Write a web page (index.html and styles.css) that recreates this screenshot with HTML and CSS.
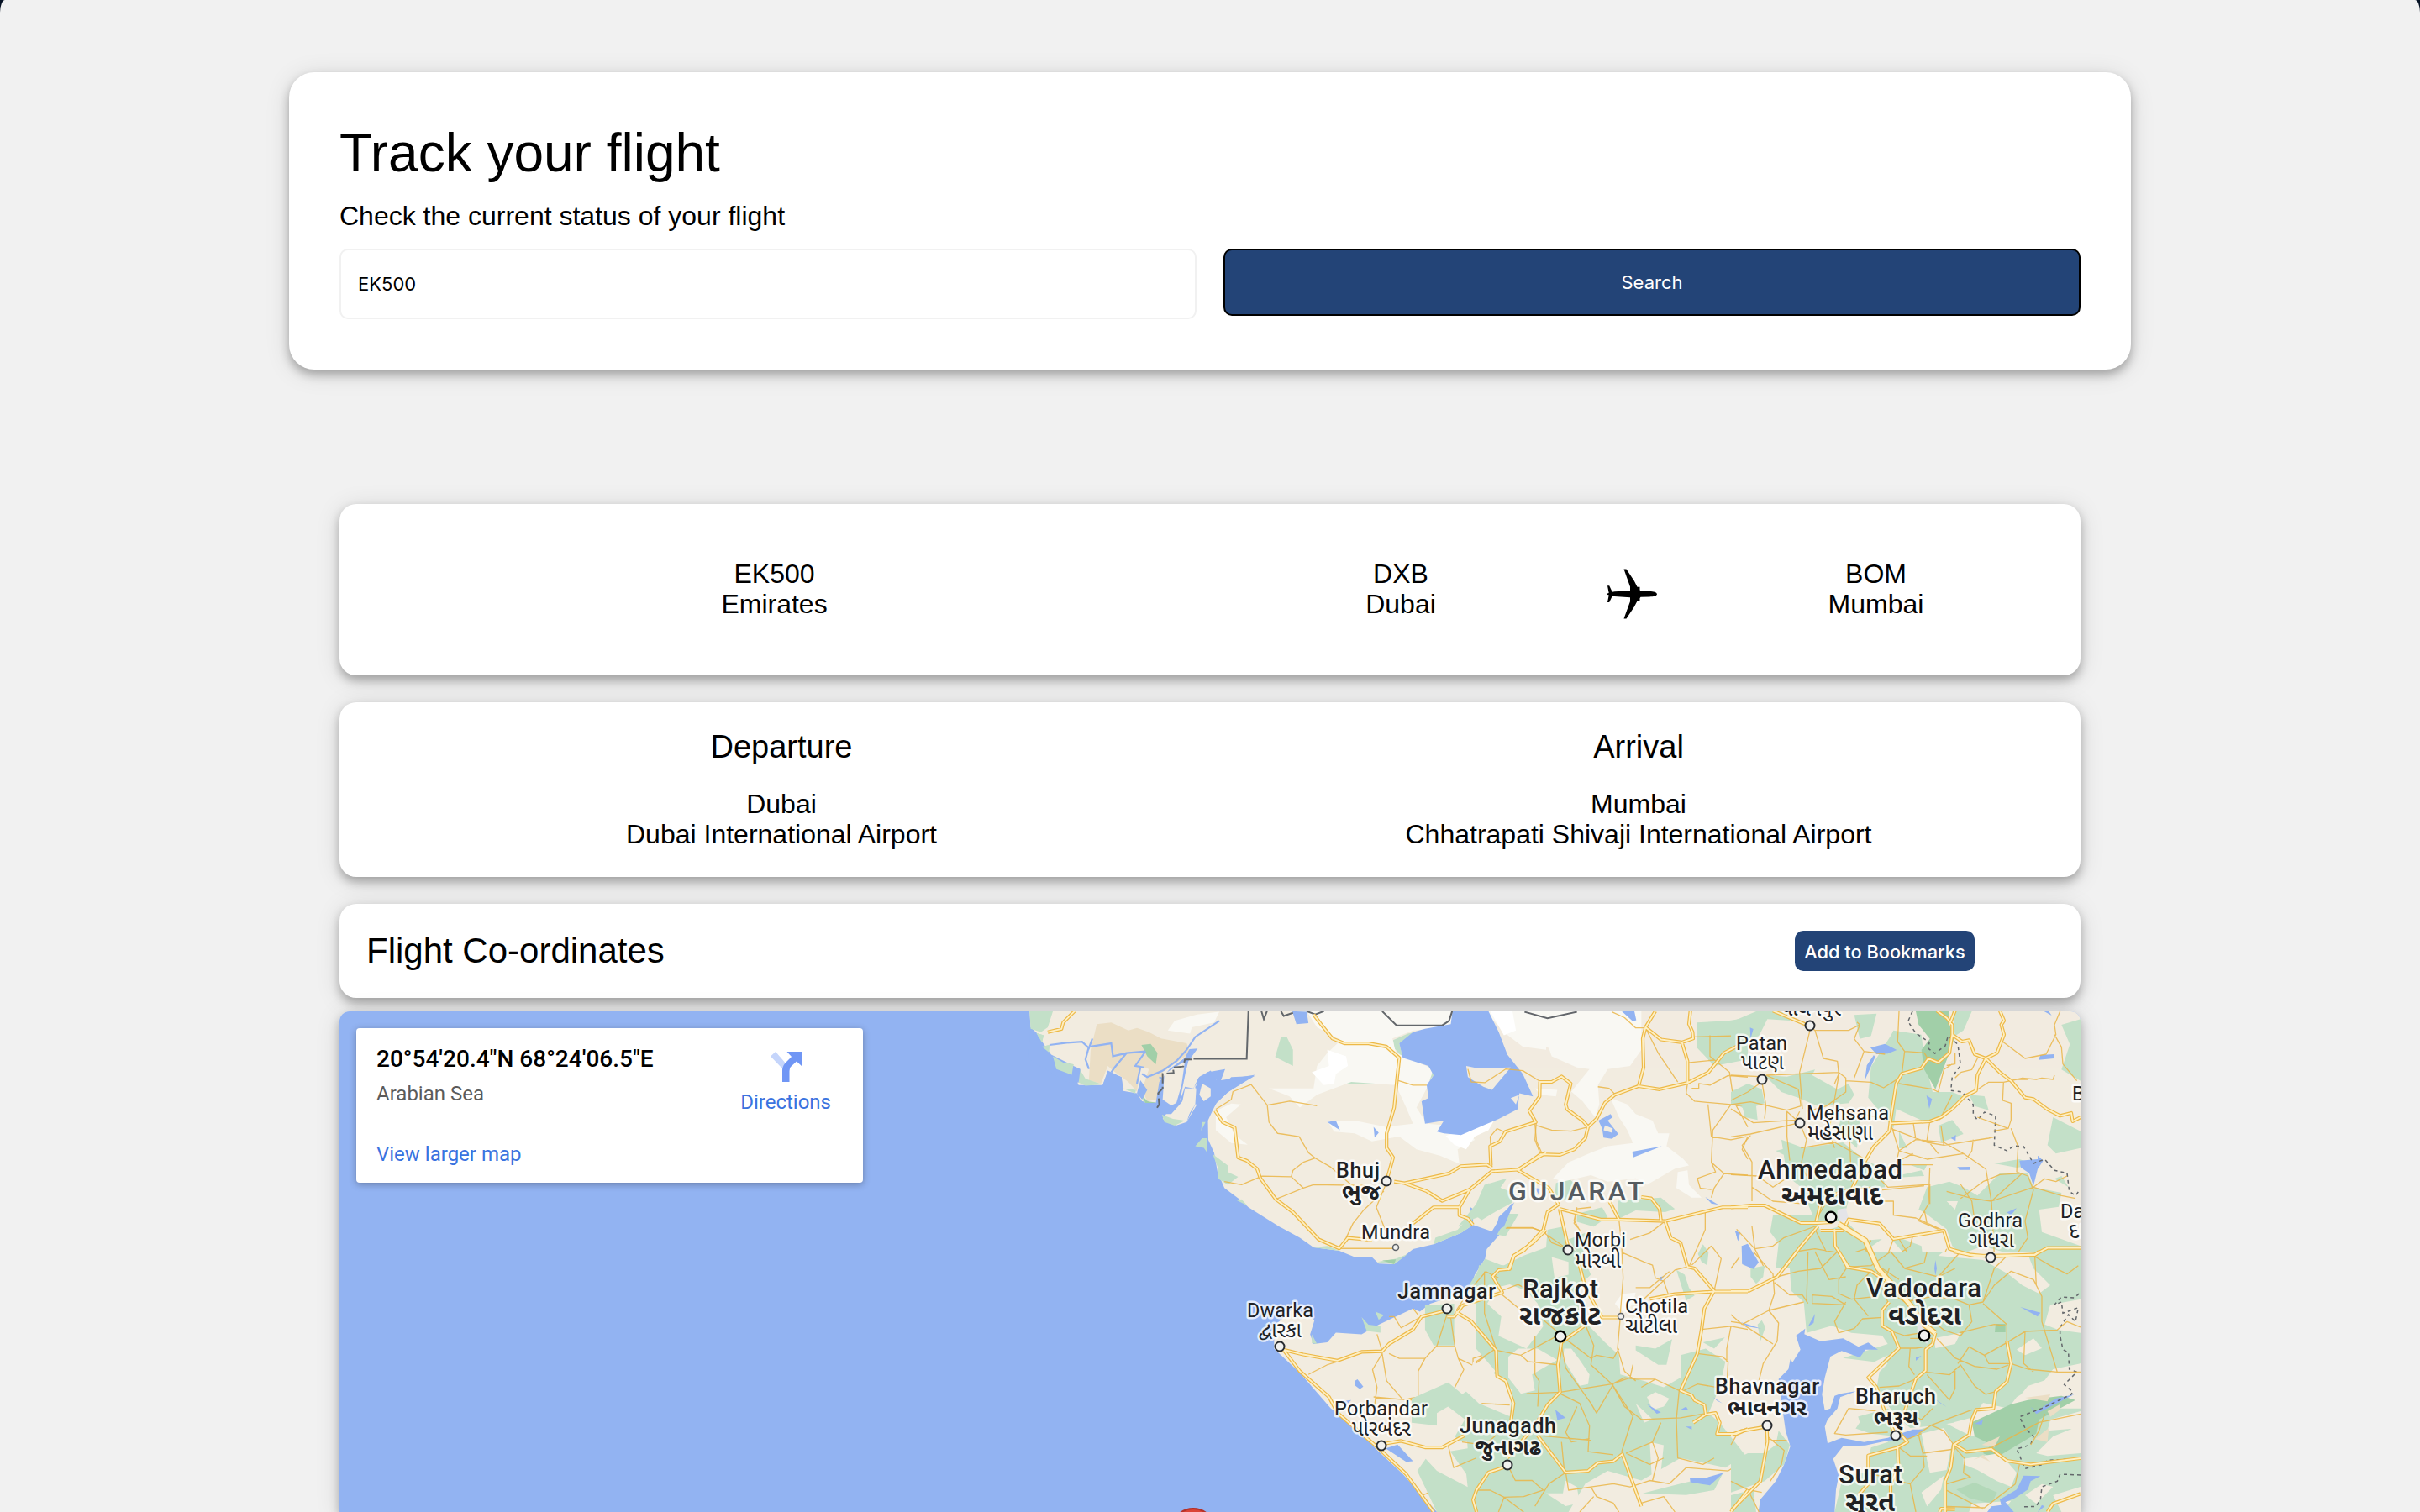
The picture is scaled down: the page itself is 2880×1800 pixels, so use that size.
FILE: index.html
```html
<!DOCTYPE html>
<html lang="en">
<head>
<meta charset="utf-8">
<title>Track your flight</title>
<link rel="stylesheet" href="styles.css">
</head>
<body>
<main class="page">
  <section class="card search-card">
    <h1 class="title">Track your flight</h1>
    <p class="subtitle">Check the current status of your flight</p>
    <form class="search-form">
      <input class="flight-input" type="text" value="EK500" aria-label="Flight number">
      <button class="search-button" type="button">Search</button>
    </form>
  </section>

  <div class="results">
    <section class="card summary">
      <p>EK500<br>Emirates</p>
      <p>DXB<br>Dubai</p>
      <svg class="plane" viewBox="0 0 60 60"><path d="M60 30.2C59.500 32.500 56 33.200 51 33.400L40.500 33.700 39.500 35.200V38.600H36.500L32.800 45.500 23.500 59.500H20.500L28 39V34.200L9.500 33 6.800 32.600 3.200 40H1L2.700 31.400 0 30.600V29.700L2.700 29 1 20.300H3.200L6.800 27.700 9.500 27.300 28 26.200V21.400L20.500.600H23.500L32.800 14.500 36.500 21.800H39.500V25.200L40.500 26.700 51 27C56 27.200 59.500 28 60 30.200Z"/></svg>
      <p>BOM<br>Mumbai</p>
    </section>

    <section class="card airports">
      <div>
        <h2 class="leg">Departure</h2>
        <p>Dubai<br>Dubai International Airport</p>
      </div>
      <div>
        <h2 class="leg">Arrival</h2>
        <p>Mumbai<br>Chhatrapati Shivaji International Airport</p>
      </div>
    </section>

    <section class="card coords">
      <h2 class="coords-title">Flight Co-ordinates</h2>
      <button class="bookmark" type="button">Add to Bookmarks</button>
    </section>

    <section class="map">
      <svg class="map-canvas" viewBox="404 1204 2072 596" preserveAspectRatio="none">
        <defs>
          <g id="major">
            <g transform="translate(1200 1200) scale(.40816 .38266)">
              <path d="M193 10L160 45 155 65 115 75M890 20L915 55 945 95 980 110 1050 110 1102 120 1140 155 1133 225 1125 310 1103 390V435L1122 465 1105 530M603 320L625 355 660 372 670 465 695 475 725 500 735 530 780 595 830 635 905 720 965 748 990 715 1060 722M1125 540L1155 545 1285 515 1320 492 1395 487 1410 497M1155 545L1220 570 1265 600 1345 565 1410 508 1485 503 1568 450M1180 670L1240 620H1315L1345 565M1315 620V645L1340 655 1355 675M790 1040V1060L860 1078 960 1097 1030 1070 1090 1068 1110 1045 1180 1000 1205 960 1280 940M1280 960H1300L1325 925 1440 885 1412 835 1430 815 1462 812 1475 770 1530 730 1568 690M1305 945L1350 975 1422 1065 1425 1145 1450 1160 1473 1230 1465 1290M800 1060L850 1130 935 1210 960 1260 1080 1370 1160 1450 1240 1568M1100 1355L1145 1347 1215 1367H1265L1330 1330M1455 1425L1400 1445 1365 1500 1355 1530 1365 1568"/>
            </g>
            <g transform="translate(1680 1200) scale(.33333 .38266)">
              <path d="M870 10L835 60 825 95 828 185 810 243 885 253 985 233 1060 200 1115 140 1160 120M835 60L890 98 965 107 985 165V233M965 107L1005 95 1003 75 990 50 995 10M810 243L725 270 690 295 660 345 630 370 610 350 555 315 550 300 568 235 535 213 500 230H458L457 275 420 320 443 355 335 385 315 415 280 430 283 490M630 370L620 405 580 440 530 457 460 455 380 505 490 560 525 612M1200 620H1110L905 663 745 658H675L530 625M705 600L740 658M820 588L855 592 885 625 890 660M905 663L925 715 960 730 985 805 1010 810 1080 880 1045 935 1035 1000 1020 1075 960 1190 1000 1205 1010 1220 1045 1235 1050 1265 1085 1260 1100 1290 1090 1325H1160L1200 1310M1050 1265L1005 1290M1200 882H1080L940 890 850 905M525 610L485 635 470 690 400 755 365 770 345 815M528 625L558 740M590 770L620 870 680 963H745M615 990L535 1040 522 1110 530 1195 485 1235 440 1300 342 1400M450 1330L550 1445 630 1440 665 1415 720 1410 752 1388 820 1550M1200 1500L1140 1568"/>
            </g>
            <g transform="translate(2060 1200) scale(.33333)">
              <path d="M150 10L270 60M735 10L770 35 790 60V95L780 160 740 195 705 180 680 215 610 235 590 270 570 400 565 440 510 495 480 545 430 650M800 10L780 60M790 95L825 120 850 115 870 165 910 180 950 160 975 95 965 60 975 45 960 10M910 180L880 240 875 295 835 315 790 360 750 390 710 405 570 412M910 180L960 230 1000 260 1050 320 1080 325 1130 362 1175 385 1215 375 1220 405 1248 390M0 712L70 705H120L250 768H310L360 765M310 780L250 850 190 930M305 760L320 700 400 650M320 795H400L420 755 530 770 580 825 760 795 780 860 850 880 930 888 1085 880 1130 857H1248M370 790L372 850 420 925"/>
            </g>
            <g transform="translate(2060 1490) scale(.33333)">
              <path d="M730 290L720 330 695 350V425L660 455 620 570 600 640M565 180L540 210V265L575 285 600 345 490 450 520 485 545 560 580 640M385 0L415 55 500 70 560 110M235 0L165 90 65 140H0M795 0L870 15 1085 12 1100 0M985 320L1000 400 985 465 945 500 937 560 875 565 860 600 850 655 795 690 785 770 765 820V930M800 690L840 715 930 705 985 747 1070 760 1248 738M595 640L630 680 595 700 490 728V830L455 870M595 700L598 770 570 830V870M0 655L40 640 128 625 130 680 105 820 0 925M1130 930L1150 900 1248 865M745 930L750 918 800 920"/>
            </g>
          </g>
          <path id="highway" d="M2188 1457L2220 1477 2235 1510 2273 1553 2290 1577 2303 1587"/>
        </defs>

        <rect class="land" x="1840" y="1200" width="640" height="600"/>

        <!-- western coast -->
        <g transform="translate(1200 1200) scale(.40816 .38266)">
          <path class="land" d="M62 10H1570V1568H1250L1150 1450 1070 1370 1040 1330 940 1245 850 1135 775 1060V990L830 935 893 970 880 1015 890 1045 930 1040 955 1010 1030 1015 1080 985 1120 965 1180 935 1200 945 1230 920 1345 880 1360 830 1390 780 1395 750 1445 690 1470 605 1430 660 1410 695 1355 675 1320 700 1240 735 1180 750 1125 797 1080 795 1060 775 1010 775 965 755 890 745 850 715 790 680 700 620 680 600 630 560 610 510 600 450 583 410 582 350 595 320 607 295 640 262 680 235 718 212 650 215 600 265 605 225 632 190 580 200 545 245 550 300 520 355 490 365 450 345 480 300 450 290 435 295 390 290 375 265 335 258 330 215 290 200 275 240 205 240 190 205 140 190 120 150 100 120 85 80 65 60Z"/>
          <path class="tan" d="M258 50L300 45 350 70 375 62 410 75 445 95 520 110 530 140 450 200 435 285 405 290 390 255 410 190 385 180 375 260 350 230 305 195 290 180 270 235 235 225 240 130Z"/>
          <path class="green" d="M62 10H130L115 60 95 75 65 65ZM82 78L103 85 98 108ZM98 120L120 115 118 138ZM130 150L160 170 190 175 185 208 140 190ZM205 185L225 220 275 238 225 242 205 232ZM335 250L372 255 370 266ZM388 272L410 292 430 290 395 294ZM448 332L480 345 515 350 485 366 455 355ZM565 355H575L562 382ZM565 405H580V450L570 435 545 430ZM596 455L640 490 640 510 670 525 640 550 610 530 612 500ZM795 90H812L830 130V180L778 152ZM960 195L990 175 1100 167 1105 235 960 237ZM1122 100L1165 80 1185 75 1140 110 1150 155 1125 125ZM1225 170L1240 210 1220 235ZM680 595L697 615 665 598ZM890 745L965 755 930 740ZM1075 790L1130 780 1165 765 1125 797ZM1245 715L1310 690 1350 640 1355 675 1320 700 1240 735ZM1365 620L1410 605 1440 590 1395 575 1400 545 1460 570 1470 605 1410 640 1380 660 1355 640ZM1460 640L1488 640 1450 710 1425 705ZM1390 780L1450 805 1500 780 1570 765V870L1440 880 1470 920 1350 900 1345 860ZM1030 962L1050 985 1085 990V1010L1045 1005ZM1070 945L1095 955 1080 970ZM1215 925L1300 920 1300 1050 1240 1050 1215 1000ZM885 1015L900 1045 885 1043Z"/>
          <path class="dgreen" d="M388 115L415 112 435 140 430 175 405 150ZM1090 785L1130 782 1125 797ZM388 270L405 290 435 295 400 295Z"/>
          <path class="pale" d="M465 70L485 40 550 20 615 12 600 45 535 60 530 80ZM870 10H1400L1370 60 1290 60 1180 70 1120 95 1130 140 1240 190 1220 250 1190 310 1220 360 1330 370 1360 410 1310 440 1315 485 1260 460 1190 440 1140 400 1060 415 1010 390 950 385 930 350 1010 350 1100 370 1180 360 1160 310 1130 240 1000 230 900 270 850 310 820 275 760 250 890 250 900 180 930 140 970 100 900 60ZM605 320L650 297 678 300 635 340 660 395 698 425 650 420 605 380ZM1390 10H1568V130L1500 120 1450 80Z"/>
          <path class="white" d="M930 130L985 150 990 180 955 205 950 235 920 240 885 200 935 180ZM1405 10H1470L1480 70 1445 85ZM1275 398L1330 380 1415 352 1400 380 1360 400 1335 440 1300 425Z"/>
          <path class="water" d="M828 10L840 50 875 47 870 12ZM1140 110L1180 75 1215 65 1290 50 1295 10H1400L1430 75 1455 145 1500 205 1530 275 1490 265 1485 315 1430 345 1375 370 1320 395 1270 390 1250 385 1270 350 1215 360 1205 290 1225 280 1220 240 1240 210 1225 180 1150 155ZM930 355L955 350 967 380ZM1065 370L1080 388 1068 403ZM1010 1160L1018 1155 1035 1178 1025 1186 1012 1175ZM1100 1370L1135 1358 1180 1410 1160 1412ZM1240 1470L1247 1468 1243 1493ZM1345 618L1355 625V675ZM1525 795L1533 800 1533 828ZM1430 650L1475 605 1445 680 1420 695ZM960 1225L1000 1220 985 1235Z"/>
          <path class="land" d="M1335 180L1365 187 1465 185 1410 255 1385 245 1340 215ZM1465 280L1490 270 1480 300Z"/>
          <path class="creek" d="M120 115L170 108 215 105 235 125 245 95M235 120L225 160 235 190M240 120L300 110 305 150 345 140 400 135M345 140L310 185 300 200M400 135L370 180 395 185M385 185L375 235M520 130L545 90 615 40M450 195L490 165 520 130M450 195L405 215 390 205M450 220L440 215"/>
          <path class="water" d="M430 295L440 230 470 190 515 155 528 128 552 126 525 165 518 195 500 290 515 245 540 250 555 215 590 195 605 225 615 200 632 190 620 225 720 208 680 235 640 262 607 295 590 320 580 350 560 300 545 300 520 355 540 290 550 235 500 300 475 330 450 330ZM62 80L90 90 105 115 125 145 190 180 210 190 205 232 170 230 60 160ZM275 240L290 195 330 215 335 255 300 260ZM375 265L385 225 405 255 390 285Z"/>
          <path class="green" d="M82 78L103 85 98 108ZM98 120L120 115 118 138ZM130 150L160 170 190 175 185 208 140 190Z"/>
          <path class="land" d="M455 205L515 165 505 240 490 295 475 303 450 285ZM515 250H548L545 300 515 350 485 340 480 328 505 305ZM565 235L590 250V275L570 290 557 270ZM520 190L590 165 620 180 570 195 535 245 515 240Z"/>
          <path class="border" d="M700 10L695 158H540M738 10L745 35 754 10M795 10L803 25 830 15M870 10L895 20 920 10M1090 10L1132 54H1265L1285 40 1294 10M1505 12L1568 32"/>
          <path class="border dash" d="M535 160L515 160 510 182 480 185 482 202 450 205V250L437 265 440 300 430 316"/>
          <path class="minor" d="M655 260L650 285 605 315M655 260L708 238 755 302 820 290 900 304M755 302L760 355 785 390 848 400 875 450 895 467 940 495 1000 550M895 467L860 480 830 505 825 525 740 523 680 550 630 540M825 525L860 560 780 595M860 560L890 550 1040 552M1102 545L1073 620 1110 720M1095 570L1035 630 1005 670 985 715M965 748H1128M1135 225L1180 240H1220M1410 497L1405 400 1425 375 1445 385M1535 355L1540 415 1555 450M1450 685H1530L1568 700M1340 190L1350 230 1390 232 1450 190 1500 195 1550 228M1390 825L1350 900M1390 825L1420 850M1392 900V990L1420 1065 1500 1070 1540 1110 1568 1105M1280 950L1250 1050 1215 1090 1195 1130V1210L1150 1218 1103 1160 1090 1075 1062 1125 1075 1180 1065 1260M1250 1053H1302L1290 965M1302 1053L1312 1090 1328 1125 1295 1195 1315 1240 1380 1290M1215 1090H1140L1110 1075M1312 1090L1355 1112 1420 1060M1355 1112V1090L1400 1075M875 1140L930 1110 960 1100M1090 1068L1075 1015M1195 955L1180 935M1205 960L1145 995 1125 960H1110M1065 1210L1150 1218 1270 1225 1295 1195M1270 1225L1310 1240 1320 1270M1380 1225L1475 1235 1525 1220 1568 1200M1380 1225L1360 1260M1265 1367L1270 1405 1315 1435 1375 1375 1420 1370M1315 1435L1345 1495 1365 1500M1215 1370L1230 1390 1220 1445 1240 1500 1210 1515M1240 1500L1265 1490 1295 1500 1300 1530 1330 1565M1400 1445L1315 1435M1455 1425L1410 1490 1445 1522 1485 1500V1470L1455 1425M1445 1522L1370 1500M1445 1522L1430 1568M1445 1522L1490 1568M1445 1522L1530 1515 1568 1490M1485 1470L1520 1465 1568 1500"/>
        </g>

        <!-- central peninsula -->
        <g transform="translate(1680 1200) scale(.33333 .38266)">
          <path class="green" d="M240 800L330 800 400 770 480 745 485 690 540 680 560 740 610 770 640 830 590 870 600 960 690 1040 740 1080 745 1140 830 1160 900 1180 960 1150 960 1080 1050 1060 1120 1100 1100 1180 1060 1260 1100 1290 1190 1390 1120 1430 960 1400 820 1470 700 1440 620 1480 560 1568 90 1568 20 1440 60 1390 200 1370 190 1250 150 1220 300 1130 230 1060 230 880ZM0 1215L130 1165 200 1215 350 1280 330 1340 180 1350 100 1300 0 1290ZM1017 45L1130 40 1200 30V160L1080 180 1020 125ZM1150 255L1200 260V320L1160 300ZM515 545L560 530 600 560 560 600 510 590ZM735 600L890 590 940 625 905 635 800 630 740 655ZM590 640L680 620 700 650 650 680 590 665ZM1040 735L1060 760 1055 800 1035 790 1022 765ZM945 815L975 830 990 870 1010 895 980 910ZM800 1050L870 1060 930 1030 910 1110 880 1110 800 1065ZM1040 1040L1118 1025 1080 1060ZM560 720L620 700 630 740 600 770ZM825 1510L960 1480 1110 1450 1080 1500 980 1515ZM260 550L340 530 300 580 340 590 270 640 210 660 165 680 230 610Z"/>
          <path class="land" d="M300 870L350 860 410 880 450 920 470 990 410 1060 310 1020 320 960 270 920ZM345 1085L380 1060 450 1060 520 1095 430 1140 440 1190 390 1200 345 1150ZM545 1060L570 1060 600 1095 635 1140 630 1170 600 1175 540 1090ZM500 775L560 790 560 830 510 840ZM840 1210L870 1195 920 1215 900 1240 860 1250ZM220 1100L300 1140 360 1190 350 1270 240 1230 190 1190ZM90 1260L130 1240 190 1280 150 1340 60 1350 0 1310 90 1300ZM10 1365L130 1370 195 1450 200 1490 90 1440ZM548 1470L590 1490 600 1540 550 1550 480 1510 540 1510ZM850 1350L900 1360 890 1440 920 1480 860 1500ZM960 1400L1030 1420 950 1450ZM800 1230L860 1280 830 1290Z"/>
          <path class="pale" d="M400 10H820V130L780 180 700 190 665 240 670 300 655 340 610 290 570 260 635 190 590 185 500 150 490 125 400 80ZM710 280L770 300 800 330 860 350 880 390 920 390 910 430 970 470 990 490 940 500 840 550 800 530 700 540 640 520 540 540 505 530 560 480 640 450 700 430 790 420 770 380 740 340ZM950 510L985 505 990 550 1035 590 1000 590 945 560ZM750 890L800 885 790 920 760 950 725 920ZM440 250L520 255 515 275 460 270Z"/>
          <path class="water" d="M750 10H795L802 38 790 42ZM667 350L710 330 718 340 700 350 738 392 715 407 685 403 680 375ZM788 447L893 430 790 465ZM1155 693L1172 700 1165 725ZM1178 740L1200 735V800L1180 795ZM1048 588L1095 612 1070 608ZM440 560L458 562 452 578ZM840 1232L890 1258 875 1262ZM960 1250L980 1240 988 1252ZM978 1302H1000V1312ZM513 1250L550 1275 520 1282ZM993 1462L1050 1462 1115 1445 1065 1485 1040 1482 995 1475ZM885 837L900 835 890 850ZM1075 1210L1110 1230 1090 1222Z"/>
          <path class="land" d="M690 365L718 375 715 388 685 380Z"/>
          <path class="border" d="M403 12L485 32 590 12"/>
          <path class="minor" d="M445 355L440 410 460 455M443 365L500 380 570 383 630 370M715 12L760 30 800 62 835 62M665 245L705 250 725 268M835 62L880 140 950 230M985 170L1080 162M1065 85V150L1135 200 1150 290 1200 370M1010 90L1200 85M985 233L980 265 1010 290 1200 305M1058 300L1070 400 1140 410 1195 400M1140 300L1075 380 1070 480 1115 515 1200 520M1070 480L1085 510 1020 530 1030 560 1070 565M1000 250L1025 250V235L1065 240 1130 210 1200 215M1115 515L1080 560 1070 590M1200 400L1180 440 1200 470M905 663L850 700 780 720M1048 630V690L990 805M1070 740L1105 780 1090 840 1080 880M1070 740L1000 800M340 683H430L465 695 540 740M470 690L500 730 560 750M590 620L580 670 600 690M640 620L590 625 580 660 605 700M740 658L750 740 755 840 745 950M750 760L830 790 860 800 870 840 900 850 920 900M920 820L850 870 800 870M985 805L940 815 860 880 830 905M470 970L550 1030 640 1090 660 1080 720 1090 740 1060M620 985L650 1050 640 1110 715 1170 780 1150 790 1110M265 820L310 840M265 820L205 880 160 940M260 820V950L303 1065M320 890L390 940 450 960M320 880L380 860 400 870M305 1065L390 1080 520 1020M390 1080L415 1100 520 1110M440 1020V1140L455 1160 450 1240M530 1195L410 1200M530 1195L715 1170 760 1150 800 1155M530 1200L600 1230 635 1300 630 1380 720 1390M720 1170L660 1260 640 1230 550 1120 535 1050M715 1170L760 1240 820 1280 960 1275 1060 1260M715 1170L790 1270 750 1380M800 1155L870 1155 955 1190M870 1155L820 1180M955 1190L945 1280 950 1400 1040 1420 1080 1400M1035 1000L1140 990 1200 1000M1020 1075L1110 1085 1130 1100 1125 1180 1170 1200M1140 990L1125 1060 1125 1100M960 1195L1020 1170 1090 1180M745 960L735 1060 760 1130 800 1160M590 1240L550 1320 570 1350 635 1340M450 1330L640 1345M535 1350L545 1440M550 1445L490 1480 440 1550M550 1445L560 1500 640 1490 720 1480 780 1490 850 1470 920 1480M640 1490L660 1520 720 1540 740 1568M820 1540L900 1520 940 1568M765 1385L860 1350 890 1290M765 1385L850 1420 900 1400M860 1350L880 1400 860 1470M342 1420L370 1470 430 1470 470 1500 400 1520 330 1522M330 1522L280 1500 230 1500M330 1522L310 1568M330 1522L400 1568M250 1230L350 1235M180 1350L260 1360 300 1330M230 1100L300 1060M130 1360L150 1430 230 1400M600 1568L650 1520M1200 1400L1130 1440 980 1430 920 1480"/>
        </g>

        <!-- north east -->
        <g transform="translate(2060 1200) scale(.33333)">
          <path class="green" d="M0 50L90 12H150L230 20 210 45 130 40 100 100 0 130ZM440 25L520 20 500 100 460 110ZM580 80L680 95 690 180 720 300 790 300 840 320 760 380 700 410 590 360 580 430 490 320 500 210 570 100ZM790 12H860L830 80 800 100ZM120 240L200 245 300 220 290 240 380 290 420 270 440 310 420 340 310 350 240 320 180 300ZM0 300L60 270 110 290 120 340 90 350 95 400 50 390 40 350 0 345ZM180 470L260 500 400 480 480 545 540 570 550 640 430 650 400 760 300 760 250 640 200 600ZM160 510L200 500 200 530ZM150 740L300 740 320 800 420 770 480 830 600 820 680 850 690 930H160L170 840 140 800ZM700 640L780 620 830 640 880 670 960 590 1060 590 1080 640 1180 660 1170 710 1100 720 1110 800 1248 850V930H980L1000 880 900 850 820 880 790 850 770 790 690 730 670 720ZM940 555L1030 540 1090 560 1020 570ZM1150 390L1248 440V500L1160 520 1130 490ZM1180 60L1248 40V260L1180 220 1210 130ZM1155 610L1180 600 1205 640ZM850 310L905 315 920 365 870 350ZM740 420L790 400 830 450 750 480ZM590 600L680 580 690 600 600 605ZM400 370L460 400 450 500 380 440ZM640 560H700L690 580ZM600 500L630 500 600 440Z"/>
          <path class="dgreen" d="M660 12H780V60L800 100 780 160 730 290 690 220 680 150 710 110 670 60Z"/>
          <path class="land" d="M490 860L560 810 620 880 590 920H500ZM700 800L760 810 730 830ZM220 400L330 440 380 480 250 480ZM770 690L810 690 800 720Z"/>
          <path class="water" d="M498 142L550 128 592 150 560 163 520 165ZM510 168L515 175 478 258 485 205ZM698 312L718 325 708 360ZM1105 168L1153 165V180L1098 185ZM785 465L803 453 802 475ZM808 568L855 567V578H815ZM1030 545L1095 540V527L1115 545 1095 575 1080 635 1065 590 1035 570ZM68 70L80 75 70 110ZM15 795L32 805 25 832ZM40 850L60 842 100 910 50 915ZM730 900L735 905 730 930ZM985 730L1020 715 1000 740ZM1118 12H1135L1145 27Z"/>
          <path class="border dot" d="M648 12L632 48 660 90 708 122 705 145 728 162 765 135 775 100 810 130 820 205 790 245 785 295 825 300 865 345V380L880 400 905 372 945 385 940 490 985 510 1010 492 1045 495 1080 555 1120 540 1155 580 1200 590 1208 655 1230 670 1245 650"/>
          <path class="minor" d="M282 65L300 80H420L460 60 450 50M282 80L245 230 255 360M300 80L330 180 380 190 385 235M125 240L385 230 410 250 410 300 340 350 270 370M125 240L240 290 250 350M0 240L100 245M460 60L440 110 475 155 550 165M475 155L440 250M600 12L595 120 620 155 690 160 705 185M620 155L610 235M385 235L370 270M410 260L500 265 545 285 600 250M600 270L720 290 740 300M130 250L60 300 0 330M110 260L125 350 120 395M0 345L70 335 200 365 250 350M0 360L80 410 230 400M245 410L70 450 0 460M245 410L200 370V460L210 545M70 455L40 490 75 550V690M0 595L95 600 150 640 210 600M75 640L150 690 270 700M245 410L270 470 250 560 270 600M385 240L350 440 370 500M250 500L370 480 480 540M420 380L430 620M570 412L600 510 700 540 830 520M600 510L590 550 650 520M650 405L660 470 600 510M710 405L700 470 740 520M660 470L760 480 830 520 910 575 930 690 940 880M570 430L700 480 760 490 920 465 940 460M865 470L860 510 840 540M750 420L760 490M880 390L990 430 1000 400 1000 340 970 330 973 265M1000 430L1025 495 1020 585 1060 600 1080 650M935 440L990 430M875 295L920 265 973 265M973 265L1020 255 1060 255M1000 260L1040 250 1090 255 1110 250 1150 255 1155 240M970 120L1050 180 1125 165 1160 95 1155 60 1175 12M1155 95L1180 140 1185 200 1235 260M820 230L860 220 880 180M800 250L820 230M770 205L800 200V160M740 300L760 220 790 200M745 400L790 310M480 545L500 580 560 640 710 630 710 700M500 580L600 560 720 560M710 570L705 700 670 760 740 790M540 650L690 635M530 690L580 690V740L660 750 760 795M820 680L900 620 960 595 1040 590M770 655L860 680 930 690 1080 640 1180 670 1230 680M820 630L860 690 870 760M1080 640L1120 610 1160 620 1200 600M1080 650L1050 760 1060 820 1020 880M930 690L1040 590M700 770L690 720M85 860L20 790M75 780L85 860 150 850 190 820 300 780M85 860L120 930M300 790L340 870 380 930M230 870L300 860 420 880 480 860 500 830M420 880L440 930M480 860L510 930M580 825L560 880 540 910M600 825L640 890 620 930M640 890L800 870M770 860L740 930M930 890L870 930M940 890L1010 930M0 930L30 890M245 370L230 400M570 405L480 380 420 370M400 650L350 680 300 760M400 650L500 640M650 810L640 850 540 920"/>
          <path class="city" d="M380 720L410 715 420 750 395 765 380 750Z"/>
        </g>

        <!-- gulf and south east -->
        <g transform="translate(2060 1490) scale(.33333)">
          <path class="green" d="M200 0H1248V400L1150 420 1120 460 1020 520 990 560 900 540 860 600 740 620 640 630 560 560 450 590 440 630 500 650 590 660 760 610 860 660 1000 620 1100 560 1248 560V930H370L400 800 480 790 500 700 560 680 590 590 520 490 530 430 560 400 400 380 560 330 540 300 430 290 360 265 270 290 260 180 215 140 210 60ZM95 260L110 245 123 270 105 320ZM70 60L120 50 115 90 90 115 70 90ZM170 640L210 690 190 760 120 820 0 860V750L60 720 120 720 160 690ZM0 870L80 850 90 930H0Z"/>
          <path class="dgreen" d="M860 610L1000 545 1060 530 1180 515 1230 530 1100 600 1090 650 990 710 940 740 900 720 930 690 870 660ZM945 258H980V288H942Z"/>
          <path class="land" d="M940 0H1090L1060 10 1080 60 1140 120 1100 150 1040 120 990 80 900 30 740 15 760 0ZM725 310L820 290 800 330 730 345ZM1140 190L1248 170V290L1170 280 1120 260ZM1020 350L1080 310 1110 345 1050 370ZM400 390L500 400 560 370 510 430 470 440 500 500 440 510 380 560 340 600 330 500 350 400ZM350 650L400 555 445 560 460 610 440 640 480 650ZM390 700H480L480 740 440 760 370 740ZM680 650L760 630 790 680 770 780 710 790 690 700ZM795 610L870 590 840 640 800 630ZM830 740L960 720 1020 790 1000 840 950 820 880 780 830 760ZM680 860L760 800 750 850 700 910ZM1090 720L1150 660 1248 620V720L1130 730ZM1020 530L1060 480 1150 450 1248 400V470L1100 510ZM1140 600L1248 570V630L1130 640ZM860 900L1000 890 970 930H850ZM1050 870L1110 830 1150 840 1090 900ZM1150 870L1248 840V930H1180Z"/>
          <path class="tan" d="M1050 522L1140 510 1130 535ZM1130 570L1175 545V565L1140 590ZM1085 670L1135 630 1130 680ZM895 690L960 660 940 700ZM865 745L900 725 925 750 890 735Z"/>
          <path class="dgreen soft" d="M805 850L870 825 950 860 930 900 850 880Z"/>
          <path class="water" d="M275 268L300 222 295 255ZM232 300L265 275 262 295 320 320 400 310 455 340 490 325 525 350 480 350 460 378 395 355 355 375 335 450 325 510 335 567 355 560 370 515 390 508 450 498 390 520 380 560 345 600 335 625 345 685 395 665 475 680 560 665 650 635 690 635 640 668 560 675 480 692 400 695 365 740 385 800 375 850 370 930H98L105 885 160 820 190 760 212 695 195 640 185 570 170 455 205 420 212 385 220 395 248 350ZM40 0H70L75 30 98 40 80 62 40 45ZM730 30L735 60 730 85 726 60ZM1033 198L1105 218 1095 232ZM870 615L900 600 895 618ZM35 252L108 275 60 268ZM660 378L680 372 660 390ZM720 520L770 555 745 540ZM1070 555L1090 570 1160 525 1225 510 1090 580ZM1045 800L1105 802 1070 820 1060 850 1015 880 980 895 1010 930H915L930 910 965 905 960 885 1020 850ZM1110 905L1120 910 1095 930Z"/>
          <path class="border dot" d="M1243 150L1225 165 1180 162 1155 190 1180 180 1185 220 1240 200 1230 250 1205 225 1175 270V300L1185 350 1205 360 1208 420 1235 430 1190 475 1220 500 1215 510 1110 560 1030 590 1050 630 1080 660 1070 690 1020 705 1050 775 1115 760 1130 745 1248 740M1248 798L1175 795 1165 820 1110 840 1105 885 1090 910 1035 912"/>
          <path class="minor" d="M80 0L150 80 155 150 135 210 170 255 165 320 115 400 100 460M0 225L40 260 135 210 260 180M155 110L210 155H255L275 185M165 90L240 70 320 60 380 0M300 0L330 60 350 100 410 90M0 250L35 255 120 310 150 330M275 0L270 180M290 155L360 160 410 190 290 185ZM410 180L370 250 385 290 440 275 470 240 540 235M415 55L385 100V150L430 170 520 160M500 70L450 120 440 170 490 230M415 55L500 50 570 0M540 60L600 100M620 60L570 0M620 60L690 40 700 0M620 60L740 90 800 60M820 0L740 90M640 310L720 310M575 285L620 300 680 290M600 345L640 345 635 410 655 440M635 345H660L695 340M735 310L800 380 870 410 950 420 990 405M820 300L760 280 735 260M815 290L940 260 985 265V320M850 190L860 250 820 300M900 185L985 260M850 190L900 180 940 120 1000 70 1080 100 1110 160V250L1165 430M985 325L1050 285 1165 280 1200 250 1248 270M905 370L985 325M905 370L850 340 810 400M905 370L920 400 1000 400 1060 420 1165 430 1248 430M1050 285L1045 400 1080 430M695 430L780 440 820 405 870 480 910 510 945 500M700 440L780 530 800 490 800 420M530 485L600 480 660 455M715 620L860 565M670 650L715 620 760 640 795 690M670 655L685 720 800 705M630 670L680 650M420 560L370 650 410 655 560 645M420 560L530 570M600 700L640 730 700 730M640 830L690 770 685 720M640 830L660 930M490 790L560 810 640 830M800 700L835 740 830 790 855 805 770 830M1030 760L1015 830 950 880 905 915 770 910M930 700L1100 610 1248 580M1085 20L1090 120 1110 160M1080 15L1140 50 1200 80 1240 50M980 20L940 60 900 180M0 690L20 655M128 670L200 675M130 660L190 710 180 760 140 820M0 820L60 850 110 860M60 850L100 930M1120 580L1100 640 1070 690M765 850L900 920M565 60L540 130 560 180M620 570L680 600 720 560M560 140L620 180 720 160 800 170 850 190"/>
          <path class="city" d="M665 260L700 250 720 280 700 330 665 300Z"/>
        </g>

        <use href="#major" class="road-edge"/>
        <use href="#major" class="road-fill"/>
        <use href="#highway" class="highway-edge"/>
        <use href="#highway" class="highway-fill"/>

        <g class="dots">
          <circle cx="2154" cy="1221" r="5.500"/><circle cx="2097" cy="1285" r="5.500"/><circle cx="2142" cy="1337" r="5.500"/><circle cx="2369" cy="1497" r="5.500"/><circle cx="2103" cy="1697" r="5.500"/><circle cx="2256" cy="1709" r="5.500"/><circle cx="1650" cy="1406" r="5.500"/><circle cx="1866" cy="1488" r="5.500"/><circle cx="1722" cy="1558" r="5.500"/><circle cx="1523" cy="1603" r="5.500"/><circle cx="1644" cy="1721" r="5.500"/><circle cx="1794" cy="1744" r="5.500"/>
        </g>
        <g class="dots small"><circle cx="1661" cy="1485" r="3.500"/><circle cx="1929" cy="1567" r="3.500"/></g>
        <g class="dots big"><circle cx="2179" cy="1449" r="6.300"/><circle cx="2290" cy="1590" r="6.300"/><circle cx="1857" cy="1591" r="6.300"/></g>

        <g class="label town">
          <text x="2066" y="1250" textLength="61">Patan</text><text class="gu" x="2072" y="1273" textLength="51" lengthAdjust="spacingAndGlyphs">પાટણ</text>
          <text class="gu" x="2120" y="1209" textLength="71" lengthAdjust="spacingAndGlyphs">પાલનપુર</text>
          <text x="2150" y="1333" textLength="98">Mehsana</text><text class="gu" x="2151" y="1357" textLength="78" lengthAdjust="spacingAndGlyphs">મહેસાણા</text>
          <text x="2330" y="1461" textLength="77">Godhra</text><text class="gu" x="2343" y="1485" textLength="54" lengthAdjust="spacingAndGlyphs">ગોધરા</text>
          <text x="2452" y="1450">Da</text><text class="gu" x="2462" y="1474">દા</text><text x="2466" y="1310">B</text>
          <text x="1620" y="1475" textLength="82">Mundra</text>
          <text x="1874" y="1484" textLength="61">Morbi</text><text class="gu" x="1874" y="1509" textLength="55" lengthAdjust="spacingAndGlyphs">મોરબી</text>
          <text x="1934" y="1563" textLength="75">Chotila</text><text class="gu" x="1934" y="1587" textLength="62" lengthAdjust="spacingAndGlyphs">ચોટીલા</text>
          <text x="1484" y="1568" textLength="79">Dwarka</text><text class="gu" x="1498" y="1592" textLength="51" lengthAdjust="spacingAndGlyphs">દ્વારકા</text>
          <text x="1588" y="1685" textLength="111">Porbandar</text><text class="gu" x="1609" y="1709" textLength="70" lengthAdjust="spacingAndGlyphs">પોરબંદર</text>
        </g>
        <g class="label city-name">
          <text x="1590" y="1402" textLength="52">Bhuj</text><text class="gu" x="1597" y="1428" textLength="46" lengthAdjust="spacingAndGlyphs">ભુજ</text>
          <text x="1663" y="1546" textLength="117">Jamnagar</text>
          <text x="1737" y="1706" textLength="115">Junagadh</text><text class="gu" x="1755" y="1732" textLength="79" lengthAdjust="spacingAndGlyphs">જુનાગઢ</text>
          <text x="2041" y="1659" textLength="124">Bhavnagar</text><text class="gu" x="2056" y="1685" textLength="94" lengthAdjust="spacingAndGlyphs">ભાવનગર</text>
          <text x="2208" y="1671" textLength="96">Bharuch</text><text class="gu" x="2230" y="1697" textLength="53" lengthAdjust="spacingAndGlyphs">ભરૂચ</text>
        </g>
        <g class="label metro">
          <text x="2092" y="1403" textLength="172">Ahmedabad</text><text class="gu" x="2120" y="1434" textLength="121" lengthAdjust="spacingAndGlyphs">અમદાવાદ</text>
          <text x="2221" y="1544" textLength="137">Vadodara</text><text class="gu" x="2247" y="1577" textLength="87" lengthAdjust="spacingAndGlyphs">વડોદરા</text>
          <text x="1812" y="1545" textLength="90">Rajkot</text><text class="gu" x="1808" y="1577" textLength="97" lengthAdjust="spacingAndGlyphs">રાજકોટ</text>
          <text x="2188" y="1766" textLength="76">Surat</text><text class="gu" x="2196" y="1799" textLength="59" lengthAdjust="spacingAndGlyphs">સુરત</text>
        </g>
        <g class="label state"><text x="1795" y="1429" textLength="161">GUJARAT</text></g>
        <circle class="pin" cx="1420" cy="1822" r="26"/>
      </svg>

      <aside class="place">
        <div class="place-text">
          <strong class="place-name">20°54'20.4"N 68°24'06.5"E</strong>
          <span class="place-area">Arabian Sea</span>
          <a class="place-link">View larger map</a>
        </div>
        <a class="directions">
          <svg class="directions-icon" viewBox="0 0 37 36"><path class="faint" d="M0 5.500L6 0 19 15 14.500 20.500Z"/><path class="solid" d="M14 36V22Q14 17 18 13L25 6 19.500 0H37V17L31 11.500 24 18Q22.500 20 22.500 23V36Z"/></svg>
          <span>Directions</span>
        </a>
      </aside>
    </section>
  </div>
</main>
</body>
</html>
```
FILE: styles.css
```css
* {
  box-sizing: border-box;
}

html {
  background: #061224;
}

body {
  margin: 0;
  height: 1800px;
  overflow: hidden;
  background: #f1f1f1;
  border-radius: 6px 6px 0 0 / 15px 15px 0 0;
  font: 32px/36px "Liberation Sans", Arial, sans-serif;
  color: #000;
}

h1, h2, p {
  margin: 0;
  font-weight: 400;
}

button, input {
  font-family: Inter, "Liberation Sans", sans-serif;
  font-size: 22px;
}

.page {
  width: 2192px;
  margin: 0 auto;
  padding-top: 86px;
}

.card {
  background: #fff;
  border-radius: 20px;
  box-shadow: 0 6px 12px rgba(0, 0, 0, .28), 0 4px 30px rgba(0, 0, 0, .12);
}

.search-card {
  height: 354px;
  padding: 60px;
  border-radius: 30px;
}

.title {
  font-size: 64px;
  line-height: 72px;
}

.subtitle {
  margin-top: 21px;
}

.search-form {
  display: grid;
  grid-template-columns: 1fr 1fr;
  align-items: start;
  gap: 32px;
  margin-top: 21px;
}

.flight-input,
.search-button {
  width: 100%;
  border-radius: 10px;
}

.flight-input {
  height: 84px;
  padding: 0 20px;
  border: 2px solid #f1f1f1;
  color: #000;
}

.search-button {
  height: 80px;
  padding: 0;
  border: 2px solid #000;
  background: #234477;
  color: #fff;
}

.results {
  margin: 160px 60px 0;
}

.results .card {
  margin-bottom: 32px;
}

.summary {
  display: grid;
  grid-template-columns: 1035px 456px 94px 487px;
  align-items: start;
  height: 204px;
  padding-top: 65px;
  text-align: center;
}

.plane {
  width: 60px;
  height: 60px;
  margin: 12px auto 0;
}

.airports {
  display: grid;
  grid-template-columns: 1fr 1fr;
  gap: 32px;
  height: 208px;
  padding: 31px 32px;
  text-align: center;
}

.leg {
  margin-bottom: 28px;
  font-size: 38px;
  line-height: 44px;
}

.results .coords {
  display: flex;
  align-items: center;
  justify-content: space-between;
  height: 112px;
  margin-bottom: 16px;
  padding: 0 126px 0 32px;
}

.coords-title {
  font-size: 42px;
  line-height: 48px;
}

.bookmark {
  width: 214px;
  height: 48px;
  padding: 2px 0 0;
  border: 0;
  border-radius: 10px;
  background: #234477;
  color: #fff;
  font-size: 21.8px;
  font-weight: 500;
  white-space: nowrap;
}

.map {
  position: relative;
  height: 596px;
  border-radius: 12px 12px 0 0;
  box-shadow: 0 6px 12px rgba(0, 0, 0, .28), 0 4px 30px rgba(0, 0, 0, .12);
}

.map-canvas {
  display: block;
  width: 100%;
  height: 100%;
  border-radius: 12px 12px 0 0;
  background: #92b3f2;
}

.map-canvas path {
  vector-effect: non-scaling-stroke;
}

.land { fill: #f2ece0; }
.pale { fill: #f9f8f3; }
.white { fill: #fff; }
.green { fill: #c3e0c8; }
.dgreen { fill: #a1cfa8; }
.soft { opacity: .5; }
.tan { fill: #ebdec5; }
.city { fill: #e4e4e8; }
.water { fill: #92b3f2; }

.creek {
  fill: none;
  stroke: #92b3f2;
  stroke-width: 2.2;
}

.border {
  fill: none;
  stroke: #63676b;
  stroke-width: 2;
}

.dash { stroke-dasharray: 12 4; }
.dot { stroke-width: 1.5; stroke-dasharray: 4 4; }

.minor {
  fill: none;
  stroke: #ebb647;
  stroke-width: 1.3;
  stroke-linejoin: round;
  opacity: .85;
}

.road-edge,
.road-fill,
.highway-edge,
.highway-fill {
  fill: none;
  stroke-linejoin: round;
}

.road-edge { stroke: #edb947; stroke-width: 4.2; }
.road-fill { stroke: #feefc3; stroke-width: 1.8; }
.highway-edge { stroke: #edb947; stroke-width: 7; }
.highway-fill { stroke: #feefc3; stroke-width: 4.5; }

.dots {
  fill: #f1f1ef;
  stroke: #292c30;
  stroke-width: 2;
}

.small { stroke: #5d6165; stroke-width: 1.5; }
.big { stroke: #000; stroke-width: 2.4; }

.label {
  font-family: Roboto, "Noto Sans Gujarati", "Noto Sans", sans-serif;
  fill: #202124;
  stroke: rgba(255, 255, 255, .75);
  stroke-width: 5px;
  stroke-linejoin: round;
  paint-order: stroke;
}

.town { font-size: 23.5px; }
.town .gu { font-size: 26px; }
.city-name { font-size: 25px; font-weight: 500; }
.metro { font-size: 31px; font-weight: 500; }
.city-name .gu { font-size: 26.5px; font-weight: 700; }
.metro .gu { font-size: 33px; font-weight: 700; }
.state { font-size: 32px; font-weight: 500; fill: #565b60; }

.pin {
  fill: #db4437;
  stroke: #b3322a;
  stroke-width: 2;
}

.place {
  position: absolute;
  top: 20px;
  left: 20px;
  display: flex;
  justify-content: space-between;
  width: 603px;
  height: 184px;
  padding: 20px 38px 0 24px;
  background: #fff;
  border-radius: 4px;
  box-shadow: 0 2px 8px rgba(0, 0, 0, .3);
  font: 24px/28px Roboto, sans-serif;
}

.place-text {
  display: flex;
  flex-direction: column;
}

.place-name {
  font-size: 28px;
  font-weight: 500;
  line-height: 34px;
}

.place-area {
  margin-top: 10px;
  color: #5b5b5b;
}

.place-link {
  margin-top: 44px;
  color: #3a73e0;
}

.directions {
  display: flex;
  flex-direction: column;
  align-items: center;
  gap: 10px;
  padding-top: 8px;
  color: #3a73e0;
}

.directions-icon {
  width: 37px;
  height: 36px;
}

.faint { fill: #c5d5fb; }
.solid { fill: #7096f5; }
```
